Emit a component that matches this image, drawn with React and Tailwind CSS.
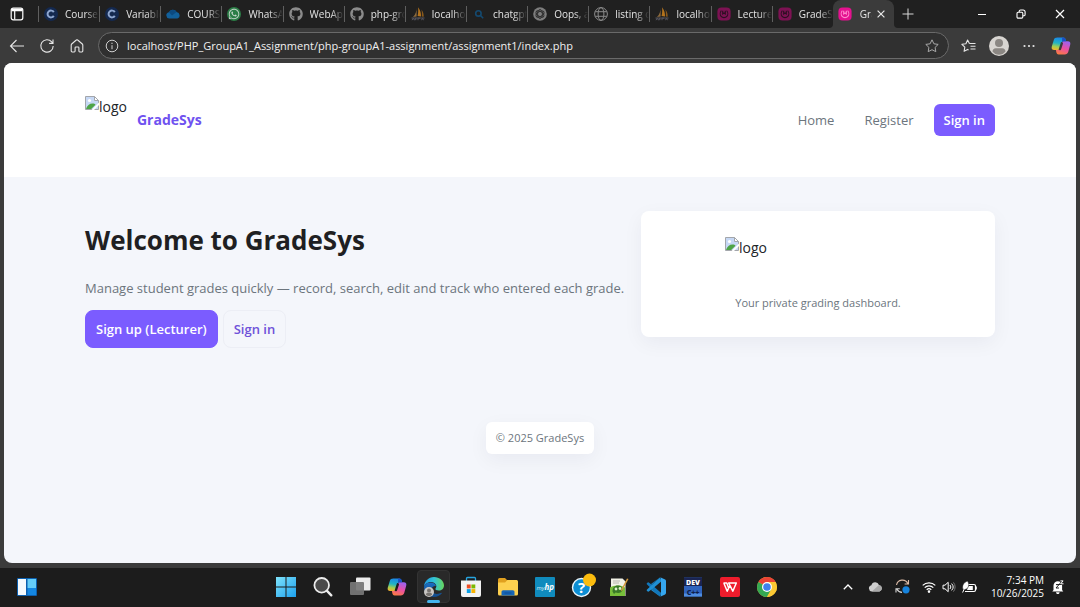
import React from "react";
import { FaGithub, FaWhatsapp } from "react-icons/fa";

/* ---------- favicons ---------- */

const CourseIcon = () => (
  <svg viewBox="0 0 16 16" className="size-4" aria-hidden="true">
    <circle cx="8" cy="8" r="7" fill="#14294f" />
    <path d="M10.8 6.1A3.4 3.4 0 1 0 10.8 9.9" fill="none" stroke="#8ea6cf" strokeWidth="2" />
  </svg>
);

const CloudIcon = () => (
  <svg viewBox="0 0 16 16" className="size-4" aria-hidden="true">
    <path d="M4.2 12.6a3.2 3.2 0 0 1-.4-6.3A4.3 4.3 0 0 1 11.6 6a3.4 3.4 0 0 1 .7 6.6z" fill="#12609b" />
    <path d="M4 6.2A4.3 4.3 0 0 1 11.6 6L7 9.4z" fill="#0c4a80" />
  </svg>
);

const SailIcon = () => (
  <svg viewBox="0 0 16 16" className="size-4" aria-hidden="true">
    <path d="M6.6 1.5C6.8 5 5.6 8.4 3 11l3.6-.6z" fill="#8c6a3d" />
    <path d="M8 1.2c2.4 2.8 3.2 6 3 9.4L7.6 10C8.3 7 8.4 4 8 1.2z" fill="#b3731d" />
    <path d="M11.4 3.5c1.8 2.2 2.4 4.6 2.3 7.3l-1.9-.3c.3-2.6.1-4.9-.4-7z" fill="#8a5a1c" />
    <path d="M1.5 12h13M2 14.2l1.2-2 1.3 2 1.3-2v2M8 14.2v-2h2M11.5 14.2l1-2 1 2" fill="none" stroke="#55555f" strokeWidth="1" />
  </svg>
);

const SearchFav = () => (
  <svg viewBox="0 0 16 16" className="size-4" aria-hidden="true">
    <circle cx="7.4" cy="7.4" r="2.7" fill="none" stroke="#14496f" strokeWidth="1.6" />
    <path d="M9.5 9.5l2.7 2.7" stroke="#14496f" strokeWidth="1.6" />
  </svg>
);

const KnotIcon = () => (
  <svg viewBox="0 0 16 16" className="size-4" aria-hidden="true">
    <circle cx="8" cy="8" r="6.8" fill="#7d7d7d" />
    <g fill="none" stroke="#2c2c2c" strokeWidth="0.9">
      <ellipse cx="8" cy="8" rx="2.4" ry="4.4" />
      <ellipse cx="8" cy="8" rx="2.4" ry="4.4" transform="rotate(60 8 8)" />
      <ellipse cx="8" cy="8" rx="2.4" ry="4.4" transform="rotate(120 8 8)" />
    </g>
  </svg>
);

const GlobeFav = () => (
  <svg viewBox="0 0 16 16" className="size-4" fill="none" stroke="#8b8b8b" strokeWidth="1" aria-hidden="true">
    <circle cx="8" cy="8" r="6.4" />
    <ellipse cx="8" cy="8" rx="2.9" ry="6.4" />
    <path d="M2.2 5.7h11.6M2.2 10.3h11.6" />
  </svg>
);

const XamppIcon = ({ active }) => (
  <svg viewBox="0 0 16 16" className="size-4 shrink-0" aria-hidden="true">
    <rect x="1.4" y="1.4" width="13.2" height="13.2" rx="4" fill={active ? "#e5128f" : "#7d1253"} />
    <path
      d="M5.4 4.6c-1.4 1.5-1.6 4.2-.3 5.7 1.5 1.7 4.3 1.7 5.8 0 1.3-1.5 1.1-4.2-.3-5.7M6.7 4.8v3.2l1.3-1 1.3 1V4.8"
      fill="none"
      stroke={active ? "#ff8ccf" : "#2a1020"}
      strokeWidth="1.1"
    />
  </svg>
);

const Github = () => <FaGithub className="size-[14px] text-[#8b8b8b]" aria-hidden="true" />;
const Whats = () => (
  <span className="flex size-[14px] items-center justify-center rounded-full bg-[#2b7d46]">
    <FaWhatsapp className="size-3 text-[#c5d6ca]" aria-hidden="true" />
  </span>
);

const tabs = [
  { label: "Course", Icon: CourseIcon },
  { label: "Variable", Icon: CourseIcon },
  { label: "COURSE", Icon: CloudIcon },
  { label: "WhatsApp", Icon: Whats },
  { label: "WebApp", Icon: Github },
  { label: "php-group", Icon: Github },
  { label: "localhost", Icon: SailIcon },
  { label: "chatgpt", Icon: SearchFav },
  { label: "Oops, an", Icon: KnotIcon },
  { label: "listing of", Icon: GlobeFav },
  { label: "localhost", Icon: SailIcon },
  { label: "Lecturer", Icon: XamppIcon },
  { label: "GradeSys", Icon: XamppIcon },
];

/* ---------- multi-colour marks ---------- */

const CopilotMark = ({ id, hole }) => (
  <svg viewBox="0 0 20 20" className="size-5" aria-hidden="true">
    <defs>
      <linearGradient id={id + "a"} x1="0.5" y1="0" x2="0.3" y2="1">
        <stop offset="0" stopColor="#1a86e8" />
        <stop offset="0.45" stopColor="#22b3c4" />
        <stop offset="0.75" stopColor="#a5cf4e" />
        <stop offset="1" stopColor="#f5b32e" />
      </linearGradient>
      <linearGradient id={id + "b"} x1="0.7" y1="0" x2="0.3" y2="1">
        <stop offset="0" stopColor="#9a62f0" />
        <stop offset="0.5" stopColor="#e94fa6" />
        <stop offset="1" stopColor="#fb7a42" />
      </linearGradient>
    </defs>
    <path d="M6.2 1.500h6.200c1.200 0 1.800.7 2.200 1.900l.5 1.800h-2.300c-1.200 0-1.800.6-2.200 1.900l-1.500 5c-.4 1.300-1 1.900-2.300 1.900H3.200C1 14 .2 12.500.8 10.400l2-6.500C3.300 2.300 4.500 1.500 6.200 1.500z" fill={"url(#" + id + "a)"} />
    <path d="M13.800 18.500H7.600c-1.200 0-1.800-.7-2.200-1.900L4.900 14h2c1.200 0 1.900-.6 2.300-1.900l1.500-5c.4-1.300 1-1.900 2.200-1.900h3.900c2.200 0 3 1.500 2.400 3.600l-2 7.300c-.5 1.600-1.700 2.400-3.400 2.400z" fill={"url(#" + id + "b)"} />
    <path d="M11.200 1.500h1.200c1.200 0 1.800.7 2.200 1.900l.5 1.800h-2.300c-.8 0-1.400.3-1.800.9z" fill="#1b4fc4" />
    <path d="M10.800 7.300L9 13" stroke={hole} strokeWidth="2.400" strokeLinecap="round" />
  </svg>
);

const BrokenImage = () => (
  <svg viewBox="0 0 14 14" className="size-[14px] shrink-0" aria-hidden="true">
    <path d="M.5.5h9l4 4v9H.5z" fill="#c6d8f5" stroke="#a3a6ab" />
    <path d="M9.5.5v4h4z" fill="#fff" stroke="#a3a6ab" />
    <circle cx="4.5" cy="4.5" r="1.6" fill="#fff" />
    <path d="M1 13c1-3.500 3.500-5.500 6.500-5.500 1.500 0 2.500.6 3 1.200L6.200 13z" fill="#4ea447" />
    <path d="M14 6.500L6.500 14H9l5-5z" fill="#fff" />
  </svg>
);

const LogoAlt = () => (
  <span className="flex items-start text-sm leading-[22px] text-[#212529]">
    <BrokenImage />
    <span>logo</span>
  </span>
);

/* ---------- browser chrome ---------- */

function TabStrip() {
  return (
    <div className="flex h-7 items-stretch bg-[#202020] text-[#e4e4e4]">
      <button aria-label="Tab actions" className="flex w-[38px] shrink-0 items-center justify-center pr-1">
        <svg viewBox="0 0 14 14" className="size-[14px]" fill="none" stroke="#fff" strokeWidth="1.2" aria-hidden="true">
          <rect x="1.2" y="1.2" width="11.6" height="11.6" rx="2" />
          <path d="M1.5 2.500h11M1.500 3.500h11" strokeWidth="1.5" />
          <path d="M4.700 4v8.500" />
        </svg>
      </button>
      <div role="tablist" className="flex min-w-0 flex-1">
        {tabs.map(({ label, Icon }, i) => (
          <button key={i} role="tab" aria-selected="false" className="flex min-w-0 flex-1 items-center">
            <span className="h-4 w-px shrink-0 bg-[#5f5f5f]" />
            <span className="ml-1 flex size-4 shrink-0 items-center justify-center">
              <Icon />
            </span>
            <span className="ml-[6px] min-w-0 flex-1 overflow-hidden text-left text-[10px] leading-4 whitespace-nowrap [mask-image:linear-gradient(to_right,black_60%,transparent)]">
              {label}
            </span>
          </button>
        ))}
        <div className="relative flex min-w-0 flex-1 items-center rounded-t-lg bg-[#3b3b3b]">
          <svg viewBox="0 0 4 4" className="absolute bottom-0 -left-1 size-1" aria-hidden="true">
            <path d="M4 0v4H0a4 4 0 0 0 4-4z" fill="#3b3b3b" />
          </svg>
          <svg viewBox="0 0 4 4" className="absolute -right-1 bottom-0 size-1" aria-hidden="true">
            <path d="M0 0v4h4a4 4 0 0 1-4-4z" fill="#3b3b3b" />
          </svg>
          <button role="tab" aria-selected="true" className="flex min-w-0 flex-1 items-center pl-1">
            <XamppIcon active />
            <span className="ml-[7px] min-w-0 flex-1 overflow-hidden text-left text-[10px] leading-4 whitespace-nowrap [mask-image:linear-gradient(to_right,black_80%,transparent)]">
              GradeSys
            </span>
          </button>
          <button aria-label="Close tab" className="mr-1 flex w-[18px] justify-center">
            <svg viewBox="0 0 8 8" className="size-2" stroke="#e8e8e8" strokeWidth="1.2" aria-hidden="true">
              <path d="M.6.6l6.800 6.800M7.400.6L.6 7.400" />
            </svg>
          </button>
        </div>
      </div>
      <button aria-label="New tab" className="flex w-7 shrink-0 items-center justify-center">
        <svg viewBox="0 0 12 12" className="size-3" stroke="#d8d8d8" aria-hidden="true">
          <path d="M6 .5v11M.5 6h11" />
        </svg>
      </button>
      <div className="ml-10 flex shrink-0">
        <button aria-label="Minimize" className="flex w-[39px] items-center justify-center">
          <svg viewBox="0 0 10 10" className="size-[10px]" stroke="#fff" aria-hidden="true">
            <path d="M1 5.500h8" />
          </svg>
        </button>
        <button aria-label="Restore" className="flex w-[39px] items-center justify-center">
          <svg viewBox="0 0 10 10" className="size-[10px]" fill="none" stroke="#fff" strokeWidth="1.1" aria-hidden="true">
            <rect x="1" y="3.300" width="5.800" height="5.800" rx="1.200" />
            <path d="M3.200 3.100V2.400A1.400 1.400 0 0 1 4.600 1h2.600A1.900 1.900 0 0 1 9.100 2.900v2.500a1.400 1.400 0 0 1-1.400 1.400H7" />
          </svg>
        </button>
        <button aria-label="Close" className="flex w-10 items-center justify-center">
          <svg viewBox="0 0 10 10" className="size-[10px]" stroke="#fff" strokeWidth="1.2" aria-hidden="true">
            <path d="M1 1l8 8M9 1L1 9" />
          </svg>
        </button>
      </div>
    </div>
  );
}

const starPath = "M8 1.800l1.900 4 4.300.6-3.100 3 .7 4.300L8 11.700l-3.800 2 .7-4.300-3.100-3 4.300-.6z";

function Toolbar() {
  return (
    <div className="flex h-[35px] items-center bg-[#3b3b3b] text-[#e6e6e6]">
      <button aria-label="Back" className="ml-2 flex w-[18px] justify-center">
        <svg viewBox="0 0 16 16" className="size-4" fill="none" stroke="#e6e6e6" strokeWidth="1.1" aria-hidden="true">
          <path d="M15 8H1.500M7.500 2L1.500 8l6 6" />
        </svg>
      </button>
      <button aria-label="Refresh" className="ml-3 flex w-[18px] justify-center">
        <svg viewBox="0 0 16 16" className="size-4" fill="none" stroke="#e6e6e6" strokeWidth="1.1" aria-hidden="true">
          <path d="M14.200 8a6.200 6.200 0 1 1-1.500-4.100L13.900 5.200M14 1.500v3.900h-3.900" />
        </svg>
      </button>
      <button aria-label="Home" className="ml-3 flex w-[18px] justify-center">
        <svg viewBox="0 0 16 16" className="size-4" fill="none" stroke="#e6e6e6" strokeWidth="1.1" strokeLinejoin="round" aria-hidden="true">
          <path d="M2.200 7.200c0-.5.200-.9.500-1.200L7.300 2c.4-.4 1-.4 1.400 0L13.300 6c.3.300.5.700.5 1.200v5.900c0 .5-.4.900-.9.900h-2.100c-.5 0-.9-.4-.9-.9V9.800c0-.5-.3-.8-.8-.8H6.900c-.5 0-.8.3-.8.8v3.300c0 .5-.4.900-.9.900H3.100c-.5 0-.9-.4-.9-.9z" />
        </svg>
      </button>
      <div className="ml-3 flex h-[27px] min-w-0 flex-1 items-center rounded-full border border-[#6a6a6a] bg-[#303030] pr-2 pl-[6px]">
        <button aria-label="Site information" className="shrink-0">
          <svg viewBox="0 0 14 14" className="size-[14px]" fill="none" stroke="#cfcfcf" aria-hidden="true">
            <circle cx="7" cy="7" r="5.800" />
            <path d="M7 6.200v4" />
            <circle cx="7" cy="4.200" r=".3" />
          </svg>
        </button>
        <input
          aria-label="Address"
          defaultValue="localhost/PHP_GroupA1_Assignment/php-groupA1-assignment/assignment1/index.php"
          className="ml-2 min-w-0 flex-1 bg-transparent text-[11px] leading-5 text-[#f0f0f0] outline-none"
        />
        <button aria-label="Add to favorites" className="shrink-0">
          <svg viewBox="0 0 16 16" className="size-4" fill="none" stroke="#a8a8a8" strokeLinejoin="round" aria-hidden="true">
            <path d={starPath} />
          </svg>
        </button>
      </div>
      <button aria-label="Favorites" className="ml-3 flex w-4 justify-center">
        <svg viewBox="0 0 16 16" className="size-4 shrink-0" fill="none" stroke="#e6e6e6" strokeWidth="1.1" strokeLinejoin="round" aria-hidden="true">
          <path d="M8.400 5.500L6.600 2 4.900 5.700.9 6.300l2.900 2.900-.7 4.100 3.500-1.900 1 .5M8.400 5.500h6.100M9.500 8.300h5M9.500 11h5" />
        </svg>
      </button>
      <button aria-label="Profile" className="ml-3 flex size-5 justify-center overflow-hidden rounded-full bg-[#d8d5d1]">
        <svg viewBox="0 0 20 20" className="size-5" fill="#8b8783" aria-hidden="true">
          <circle cx="10" cy="7" r="4" />
          <path d="M3.500 15.500c0-2 1.300-3.300 3.300-3.300h6.400c2 0 3.300 1.300 3.300 3.300-1.500 2-3.800 3.300-6.500 3.300s-5-1.300-6.500-3.300z" />
        </svg>
      </button>
      <button aria-label="Settings and more" className="ml-3 flex w-4 justify-center">
        <svg viewBox="0 0 14 4" className="h-1 w-[14px]" fill="#e6e6e6" aria-hidden="true">
          <circle cx="2.500" cy="2" r="1.100" />
          <circle cx="7" cy="2" r="1.100" />
          <circle cx="11.500" cy="2" r="1.100" />
        </svg>
      </button>
      <button aria-label="Copilot" className="mr-[9px] ml-[14px] flex w-5 justify-center">
        <CopilotMark id="bar" hole="#3b3b3b" />
      </button>
    </div>
  );
}

/* ---------- page ---------- */

function Page() {
  return (
    <div className="flex-1 overflow-hidden rounded-lg bg-[#f4f6fb]">
      <header className="bg-white px-4 py-[33px]">
        <div className="mx-auto flex max-w-[910px] items-center justify-between">
          <a href="#home" className="flex h-12 items-center gap-[10px]">
            <span className="h-full">
              <LogoAlt />
            </span>
            <span className="text-sm leading-5 font-bold text-[#6f52f0]">GradeSys</span>
          </a>
          <nav className="flex items-center text-[13px] leading-5 text-[#6c757d]">
            <a href="#home" className="px-[10px]">Home</a>
            <a href="#register" className="ml-[10px] px-[10px]">Register</a>
            <a href="#signin" className="ml-[10px] rounded-md bg-[#7b5cff] px-[10px] py-[6px] font-semibold text-white">
              Sign in
            </a>
          </nav>
        </div>
      </header>

      <main className="px-4 pt-[34px]">
        <section className="mx-auto flex max-w-[910px] items-start justify-between gap-4">
          <div>
            <h1 className="pt-[11px] text-[26px] leading-9 font-bold text-[#1f1f22]">Welcome to GradeSys</h1>
            <p className="mt-5 text-[13px] leading-5 text-[#6c757d]">
              Manage student grades quickly — record, search, edit and track who entered each grade.
            </p>
            <div className="mt-3 flex gap-[5px] text-[13px] leading-5 font-semibold">
              <a href="#signup" className="rounded-lg border border-[#7b5cff] bg-[#7b5cff] px-[10px] py-2 text-white">
                Sign up (Lecturer)
              </a>
              <a href="#signin" className="rounded-lg border border-[#eceef5] px-[10px] py-2 text-[#6f52d9]">
                Sign in
              </a>
            </div>
          </div>
          <aside className="flex w-[354px] shrink-0 flex-col items-center rounded-lg bg-white pt-[26px] pb-6 shadow-[0_6px_20px_rgba(20,20,50,0.05)]">
            <div className="h-14 w-[186px]">
              <LogoAlt />
            </div>
            <p className="text-[11px] leading-5 text-[#6c757d]">Your private grading dashboard.</p>
          </aside>
        </section>
        <footer className="mt-[74px] flex justify-center">
          <p className="rounded-md bg-white px-[10px] py-[6px] text-[11px] leading-5 text-[#6c757d] shadow-[0_6px_20px_rgba(20,20,50,0.05)]">
            © 2025 GradeSys
          </p>
        </footer>
      </main>
    </div>
  );
}

/* ---------- taskbar ---------- */

const apps = [
  {
    name: "Start",
    art: (
      <>
        <linearGradient id="win" x1="0" y1="0" x2="1" y2="1">
          <stop offset="0" stopColor="#7fe3fb" />
          <stop offset="1" stopColor="#1ba0ee" />
        </linearGradient>
        <path d="M0 0h9.500v9.500H0zM10.500 0H20v9.500h-9.500zM0 10.500h9.500V20H0zM10.500 10.500H20V20h-9.500z" fill="url(#win)" />
      </>
    ),
  },
  {
    name: "Search",
    art: (
      <>
        <circle cx="8.700" cy="8.300" r="7.300" fill="#4a4a4a" stroke="#ececec" strokeWidth="1.8" />
        <path d="M14 13.800l4.300 4.500" stroke="#ececec" strokeWidth="2.4" strokeLinecap="round" />
      </>
    ),
  },
  {
    name: "Task view",
    art: (
      <>
        <rect x="6" y=".5" width="14.500" height="13" rx="1" fill="#ededed" />
        <rect x="0" y="5" width="14" height="13" rx="1" fill="#777" fillOpacity=".93" />
      </>
    ),
  },
  { name: "Copilot", mark: true },
  {
    name: "Edge",
    active: true,
    art: (
      <>
        <defs>
          <linearGradient id="edgeTop" x1="0" y1="0.5" x2="1" y2="0.5">
            <stop offset="0" stopColor="#2396dc" />
            <stop offset="0.5" stopColor="#30c3d8" />
            <stop offset="1" stopColor="#68d65c" />
          </linearGradient>
          <linearGradient id="edgeBase" x1="0" y1="0" x2="0" y2="1">
            <stop offset="0" stopColor="#1a6fc4" />
            <stop offset="1" stopColor="#114a8b" />
          </linearGradient>
        </defs>
        <path d="M0 10C0 4.500 4.500 0 10 0s10 4 10 8.500c0 3-2.300 5-5.200 5-2.500 0-3.800-1-3.300-2 .5-.8 1-1.400.8-2.700C11.900 6.300 9.500 5 7 5 3 5 .5 7.800 0 10z" fill="url(#edgeTop)" />
        <path d="M0 10c.5-2.600 3-4.500 6.500-4.500 3 0 5.300 1.700 5.500 3.800-1-1-4.500.2-4.500 3.400 0 3 3.500 5.300 8.500 3.600l2.200-.6C16.500 18.300 13.500 20 10 20 4.500 20 0 15.500 0 10z" fill="url(#edgeBase)" />
        <circle cx="5" cy="15" r="5" fill="#c9c6c3" />
        <circle cx="5" cy="13.500" r="2" fill="#77736f" />
        <path d="M1.900 17.400c.2-1.200 1-1.700 2-1.700h2.200c1 0 1.800.5 2 1.700-1.800 2-4.400 2-6.200 0z" fill="#77736f" />
      </>
    ),
  },
  {
    name: "Microsoft Store",
    art: (
      <>
        <path d="M5.500 4V1.500c0-.6.400-1 1-1h7c.6 0 1 .4 1 1V4" fill="none" stroke="#27a5e0" strokeWidth="1.3" />
        <path d="M0 3.500h20V18a2 2 0 0 1-2 2H2a2 2 0 0 1-2-2z" fill="#f2f2f2" />
        <path d="M5.800 7.500h3.900v3.900H5.800z" fill="#ee4f25" />
        <path d="M10.400 7.500h3.900v3.900h-3.900z" fill="#7cb701" />
        <path d="M5.800 12.100h3.900V16H5.800z" fill="#0ba1e8" />
        <path d="M10.400 12.100h3.900V16h-3.900z" fill="#f9b300" />
      </>
    ),
  },
  {
    name: "File Explorer",
    art: (
      <>
        <path d="M0 2.500A1.500 1.500 0 0 1 1.500 1H7l2 2h10v6H0z" fill="#e0a01f" />
        <path d="M0 5.500h7L9.500 3H18.500A1.500 1.500 0 0 1 20 4.500V17a1.500 1.500 0 0 1-1.500 1.500h-17A1.500 1.500 0 0 1 0 17z" fill="#fdd04f" />
        <path d="M3.500 18.500v-3.500c0-1 .6-1.700 1.700-1.700h9.600c1.100 0 1.700.7 1.700 1.700v3.500z" fill="#1766b5" />
        <path d="M6.500 16h7" stroke="#0e4d93" strokeWidth="1" />
      </>
    ),
  },
  {
    name: "myHP",
    art: (
      <>
        <rect width="20" height="20" rx="1" fill="#108bbd" />
        <text x="1.500" y="12.500" fontSize="6" fontStyle="italic" fill="#d5eef8">my</text>
        <text x="9.500" y="13" fontSize="8" fontStyle="italic" fontWeight="700" fill="#fff">hp</text>
      </>
    ),
  },
  {
    name: "Get Help",
    art: (
      <>
        <circle cx="9.500" cy="10.500" r="9" fill="#0c8ed4" stroke="#e9f5fb" strokeWidth="1.4" />
        <text x="9.500" y="16" fontSize="15" fontWeight="700" textAnchor="middle" fill="#fff">?</text>
        <circle cx="17.500" cy="3" r="6.500" fill="#fbbc0e" />
      </>
    ),
  },
  {
    name: "Notepad++",
    art: (
      <>
        <path d="M2 1.500h11.500l3 3V19H2z" fill="#f1f1e6" />
        <path d="M1 10.500c3-2.500 11-3 15 0V19H1z" fill="#78bf3a" />
        <path d="M3.500 14.500c0-4 2.500-6.500 6-6 3 .4 4.500 2.500 4 4.500-.5 2.500-3.500 3.500-7 2.500l-1.500 1.500z" fill="#397a27" />
        <circle cx="7" cy="12" r="1.400" fill="#dff1c8" />
        <circle cx="11" cy="11.500" r="1.400" fill="#dff1c8" />
        <path d="M4 4h7M4 6h6" stroke="#a9a9a0" strokeWidth=".8" />
        <path d="M19.500 2l-6 11-1.500 1.500.3-2.300L18 1.500z" fill="#d49a3c" />
      </>
    ),
  },
  {
    name: "Visual Studio Code",
    art: (
      <>
        <path d="M14.200.3L6 8 2.500 5.300.8 6.100v1.100L11.500 17.500l2.700 2.200 1.300-3.400L5 7z" fill="#1177bb" />
        <path d="M14.200 19.700L6 12l-3.500 2.700-1.700-.8v-1.100L14.200.3l1.300 4L5 13z" fill="#1f8fd3" />
        <path d="M14.200.3l4.900 2.200c.5.300.9.800.9 1.400v12.200c0 .6-.4 1.100-.9 1.400l-4.900 2.200c.6-.2.8-.6.8-1.200v-17c0-.6-.2-1-.8-1.200z" fill="#35a6ee" />
      </>
    ),
  },
  {
    name: "Dev-C++",
    art: (
      <>
        <rect x="1" y=".5" width="18" height="19" fill="#2f63bd" />
        <rect x="1" y=".5" width="18" height="8.500" fill="#1a2452" />
        <text x="10" y="7.500" fontSize="7" fontWeight="800" textAnchor="middle" fill="#fff">DEV</text>
        <path d="M1 16.500h18v3H1z" fill="#4e8de0" />
        <text x="10" y="17.500" fontSize="7" fontWeight="800" textAnchor="middle" fill="#0f2048">C++</text>
      </>
    ),
  },
  {
    name: "WPS Office",
    art: (
      <>
        <rect width="20" height="20" rx="2" fill="#ee1c2c" />
        <path d="M3.500 6h3.300l2 5.500M3.800 6l3.400 8.200L10 8.500l2.800 5.700L16.300 6H8.600l1.400 2.500" fill="none" stroke="#fff" strokeWidth="1.500" strokeLinejoin="round" />
      </>
    ),
  },
  {
    name: "Chrome",
    art: (
      <>
        <circle cx="10" cy="10" r="10" fill="#fcc934" />
        <path d="M10 10L1.340 5A10 10 0 0 1 18.660 5z" fill="#ea4335" />
        <path d="M1.340 5A10 10 0 0 0 10 20l4.300-7.500L10 10z" fill="#34a853" />
        <path d="M18.660 5H10v5l4.300 2.500L10 20A10 10 0 0 0 18.660 5z" fill="#fcc934" />
        <circle cx="10" cy="10" r="5" fill="#fff" />
        <circle cx="10" cy="10" r="3.800" fill="#3f82ee" />
      </>
    ),
  },
];

function Taskbar() {
  return (
    <footer className="grid h-[39px] grid-cols-[1fr_auto_1fr] items-center bg-[#1c1c1c] pb-[2px] text-white">
      <button aria-label="Widgets" className="ml-[17px] flex w-5">
        <svg viewBox="0 0 20 18" className="h-[18px] w-5" aria-hidden="true">
          <rect width="20" height="18" rx="1" fill="#0c5fae" />
          <rect x="1" y="1" width="8" height="16" fill="#f4f9fd" />
          <rect x="10.500" y="1" width="8.500" height="9" fill="#65cdf8" />
          <rect x="10.500" y="10" width="8.500" height="7" fill="#1487e2" />
        </svg>
      </button>
      <nav aria-label="Apps" className="mr-7 flex">
        {apps.map((app) => (
          <button key={app.name} aria-label={app.name} className="relative flex h-[37px] w-[37px] items-center justify-center">
            {app.active && <span className="absolute inset-x-[2px] inset-y-[2px] rounded-sm border border-[#333] bg-[#292929]" />}
            {app.mark ? (
              <CopilotMark id="task" hole="#1c1c1c" />
            ) : (
              <svg viewBox="0 0 20 20" className="relative size-5 overflow-visible" aria-hidden="true">
                {app.art}
              </svg>
            )}
            {app.active && <span className="absolute bottom-[2px] h-[3px] w-[13px] rounded-full bg-[#45b5ee]" />}
          </button>
        ))}
      </nav>
      <div className="mr-4 flex items-center justify-end">
        <button aria-label="Show hidden icons" className="mr-[15px]">
          <svg viewBox="0 0 10 6" className="h-[6px] w-[10px]" fill="none" stroke="#fff" strokeWidth="1.3" aria-hidden="true">
            <path d="M.8 5.200L5 1l4.200 4.200" />
          </svg>
        </button>
        <button aria-label="OneDrive" className="mr-3">
          <svg viewBox="0 0 15 11" className="h-[11px] w-[15px]" aria-hidden="true">
            <path d="M3.800 10.500a3.200 3.200 0 0 1-.4-6.300A4 4 0 0 1 11 3.900a3.400 3.400 0 0 1 .5 6.600z" fill="#cfcfcf" />
            <path d="M3.800 10.500L11 3.900a3.400 3.400 0 0 1 .5 6.600z" fill="#a9a9a9" />
          </svg>
        </button>
        <button aria-label="Updates" className="mr-3">
          <svg viewBox="0 0 15 15" className="size-[15px]" fill="none" aria-hidden="true">
            <path d="M1.500 6A6 6 0 0 1 12.800 4.500M13.500 1v4H9.600" stroke="#d9b9a5" strokeWidth="1.1" />
            <path d="M7 13.400A6 6 0 0 1 2 10.200M1 13.500V9.700h3.800" stroke="#d8d8d8" strokeWidth="1.1" />
            <circle cx="11" cy="10.800" r="3.600" fill="#1683dd" />
          </svg>
        </button>
        <button aria-label="Network, sound and battery" className="mr-[14px] flex items-center gap-[6px]">
          <svg viewBox="0 0 14 12" className="h-3 w-[14px]" fill="none" stroke="#fff" strokeWidth="1.2" aria-hidden="true">
            <path d="M.7 4.400a9 9 0 0 1 12.600 0M2.700 6.700a6 6 0 0 1 8.600 0M4.700 8.800a3.300 3.300 0 0 1 4.600 0" />
            <circle cx="7" cy="10.600" r=".7" fill="#fff" />
          </svg>
          <svg viewBox="0 0 14 12" className="h-3 w-[14px]" fill="none" stroke="#fff" aria-hidden="true">
            <path d="M1 4.200h2L6.200 1.300v9.400L3 7.800H1zM8 4a3 3 0 0 1 0 4M9.600 2.600a5 5 0 0 1 0 6.800" />
            <path d="M11.400 1.400a7 7 0 0 1 0 9.200" stroke="#777" />
          </svg>
          <svg viewBox="0 0 15 12" className="h-3 w-[15px]" aria-hidden="true">
            <path d="M4 3.500h8a1.500 1.500 0 0 1 1.500 1.500v4A1.500 1.500 0 0 1 12 10.500H3" fill="none" stroke="#fff" strokeWidth="1.2" />
            <path d="M14.300 5.500v3" stroke="#fff" />
            <path d="M6.500 5h4.300v4H5z" fill="#fff" />
            <path d="M5.500 0c2 3 1.500 6.500-1.500 8.300H1C-.3 5 1.500 1.500 5.500 0z" fill="#fff" stroke="#1c1c1c" strokeWidth=".5" />
            <path d="M.6 11.500L3.600 5" stroke="#fff" />
          </svg>
        </button>
        <div className="mr-2 text-right text-[10px] leading-[13px]">
          <div>7:34 PM</div>
          <div>10/26/2025</div>
        </div>
        <button aria-label="Notifications">
          <svg viewBox="0 0 12 14" className="h-[14px] w-3" aria-hidden="true">
            <path d="M1.500 10V5.500A4.300 4.300 0 0 1 5.800 1.200a4.300 4.300 0 0 1 4.300 4.300V10l1.200 1.500H.3zM4 12.300h3.600a1.800 1.800 0 0 1-3.600 0z" fill="#fff" />
            <path d="M4 4.600h3L4 8h3" fill="none" stroke="#1c1c1c" />
            <path d="M8.400.9h2.700L8.600 3.800h2.900" fill="none" stroke="#1c1c1c" strokeWidth="2.2" />
            <path d="M8.400.9h2.700L8.600 3.800h2.900" fill="none" stroke="#fff" />
          </svg>
        </button>
      </div>
    </footer>
  );
}

export default function App() {
  return (
    <div className="flex min-h-screen flex-col bg-[#3b3b3b] font-['Open_Sans','Noto_Sans',sans-serif]">
      <TabStrip />
      <Toolbar />
      <div className="flex flex-1 flex-col px-1 pb-[5px]">
        <Page />
      </div>
      <Taskbar />
    </div>
  );
}
